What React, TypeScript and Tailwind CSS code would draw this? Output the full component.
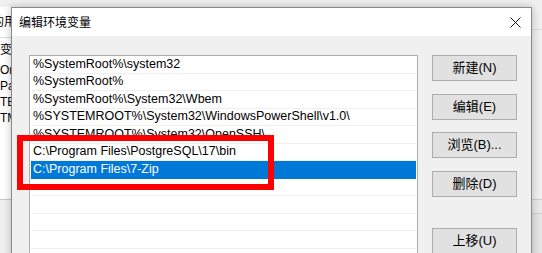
const paths = [
  "%SystemRoot%\\system32",
  "%SystemRoot%",
  "%SystemRoot%\\System32\\Wbem",
  "%SYSTEMROOT%\\System32\\WindowsPowerShell\\v1.0\\",
  "%SYSTEMROOT%\\System32\\OpenSSH\\",
  "C:\\Program Files\\PostgreSQL\\17\\bin",
  "C:\\Program Files\\7-Zip",
  "",
  "",
  "",
  "",
]

const buttons = ["新建(N)", "编辑(E)", "浏览(B)...", "删除(D)"]

function BackWindow() {
  return (
    <div className="absolute inset-0 flex flex-col">
      <div className="h-[7px] bg-[#f0f0f0]" />
      <div className="flex flex-1">
        {/* left part of the environment variables window */}
        <div className="flex w-[11px] flex-col overflow-hidden bg-white">
          <div className="flex h-[30px] items-center whitespace-nowrap text-[12px] text-black">
            <span className="-ml-[8px]">的用户变量(U)</span>
          </div>
          <div className="h-px bg-[#d9d9d9]" />
          <div className="flex h-[24px] items-center whitespace-nowrap text-[12px] text-black">
            <span>变量</span>
          </div>
          <div className="flex flex-col whitespace-nowrap text-[12px] leading-[16px] text-black">
            <span>OneDrive</span>
            <span>Path</span>
            <span>TEMP</span>
            <span>TMP</span>
          </div>
          <div className="flex-1" />
          <div className="h-px bg-[#c8c8c8]" />
          <div className="h-[53px] bg-[#f0f0f0]" />
        </div>
        <div className="flex-1" />
        {/* right part */}
        <div className="flex w-[10px] flex-col bg-[#f0f0f0]">
          <div className="h-[22px]" />
          <div className="h-px bg-[#dcdcdc]" />
          <div className="h-[169px]" />
          <div className="h-px bg-[#cfcfcf]" />
          <div className="h-[13px] bg-[#e9e9e9]" />
          <div className="h-px bg-[#cfcfcf]" />
          <div className="flex-1 bg-[#e4e4e4]" />
        </div>
      </div>
    </div>
  )
}

export default function App() {
  return (
    <div className="relative h-[253px] w-[542px] overflow-hidden bg-[#f0f0f0] font-['Liberation_Sans','Noto_Sans_CJK_SC',sans-serif]">
      <BackWindow />

      <div className="absolute left-[11px] top-[7px] flex h-[270px] w-[521px] flex-col border border-[#8a8a8a] bg-[#f0f0f0] shadow-[0_0_8px_rgba(0,0,0,0.25)]">
        <div className="flex h-[28px] items-center justify-between bg-white pl-[7px] pr-[10px]">
          <span className="text-[12px] text-black font-['Noto_Sans_CJK_SC',sans-serif]">编辑环境变量</span>
          <svg width="11" height="11" viewBox="0 0 11 11">
            <path d="M0.5 0.5 L10.5 10.5 M10.5 0.5 L0.5 10.5" stroke="#1a1a1a" strokeWidth="1" fill="none" />
          </svg>
        </div>

        <div className="flex gap-[14px] pl-[17px] pr-[14px] pt-[19px]">
          <div className="flex h-[220px] w-[389px] flex-col border border-[#adadad] bg-white px-px">
            {paths.map((p, i) => (
              <div
                key={i}
                className={
                  i === 6
                    ? "flex h-[17.5px] shrink-0 items-center whitespace-nowrap bg-[#0078d7] pl-[2px] text-[12.5px] text-white"
                    : "flex h-[17.5px] shrink-0 items-center whitespace-nowrap border-b border-[#f0f0f0] pl-[2px] text-[12.5px] text-black"
                }
              >
                {p}
              </div>
            ))}
          </div>

          <div className="flex w-[85px] flex-col gap-[12.5px]">
            {buttons.map((b) => (
              <button
                key={b}
                className="flex h-[26px] items-center justify-center border border-[#adadad] bg-[#e1e1e1] text-[13px] text-black"
              >
                {b}
              </button>
            ))}
            <button className="mt-[19px] flex h-[26px] items-center justify-center border border-[#adadad] bg-[#e1e1e1] text-[13px] text-black">
              上移(U)
            </button>
          </div>
        </div>
      </div>

      {/* red annotation box */}
      <div className="absolute left-[17px] top-[135px] h-[55px] w-[257px] border-[6px] border-[#ff0000]" />
    </div>
  )
}
